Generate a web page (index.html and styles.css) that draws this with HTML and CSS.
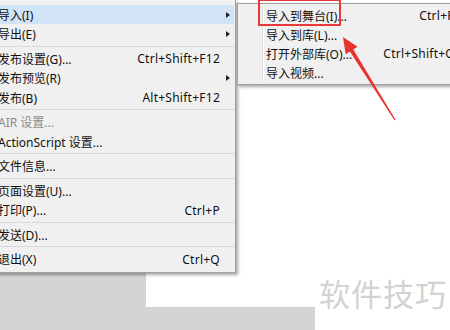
FILE: index.html
```html
<!DOCTYPE html>
<html lang="zh-CN">
<head>
  <meta charset="UTF-8">
  <title>导入菜单</title>
  <link rel="stylesheet" href="styles.css">
</head>
<body>
<div class="workspace">
  <div class="stage"></div>
</div>

<div class="menu">
  <div class="item active"><span class="label">导入(I)</span><span class="key"></span><span class="arrow"></span></div>
  <div class="item"><span class="label">导出(E)</span><span class="key"></span><span class="arrow"></span></div>
  <div class="sep"></div>
  <div class="item"><span class="label">发布设置(G)...</span><span class="key">Ctrl+Shift+F12</span><span class="noarrow"></span></div>
  <div class="item"><span class="label">发布预览(R)</span><span class="key"></span><span class="arrow"></span></div>
  <div class="item"><span class="label">发布(B)</span><span class="key">Alt+Shift+F12</span><span class="noarrow"></span></div>
  <div class="sep"></div>
  <div class="item disabled"><span class="label">AIR 设置...</span><span class="key"></span><span class="noarrow"></span></div>
  <div class="item"><span class="label">ActionScript 设置...</span><span class="key"></span><span class="noarrow"></span></div>
  <div class="sep"></div>
  <div class="item"><span class="label">文件信息...</span><span class="key"></span><span class="noarrow"></span></div>
  <div class="sep"></div>
  <div class="item"><span class="label">页面设置(U)...</span><span class="key"></span><span class="noarrow"></span></div>
  <div class="item"><span class="label">打印(P)...</span><span class="key">Ctrl+P</span><span class="noarrow"></span></div>
  <div class="sep"></div>
  <div class="item"><span class="label">发送(D)...</span><span class="key"></span><span class="noarrow"></span></div>
  <div class="sep"></div>
  <div class="item"><span class="label">退出(X)</span><span class="key">Ctrl+Q</span><span class="noarrow"></span></div>
</div>

<div class="submenu">
  <div class="sub-item"><span class="label">导入到舞台(I)...</span><span class="key">Ctrl+R</span></div>
  <div class="sub-item"><span class="label">导入到库(L)...</span><span class="key"></span></div>
  <div class="sub-item"><span class="label">打开外部库(O)...</span><span class="key">Ctrl+Shift+O</span></div>
  <div class="sub-item"><span class="label">导入视频...</span><span class="key"></span></div>
</div>

<div class="mark-box"></div>
<svg class="mark-arrow" width="450" height="330" viewBox="0 0 450 330">
  <polygon fill="#e8322e" points="343,37 357.5,46.7 353.3,49.4 395.4,119.6 394.6,120.4 349.9,51.6 345.7,54.3"/>
</svg>

<div class="watermark">软件技巧</div>
</body>
</html>
```

FILE: styles.css
```css
body {
  margin: 0;
  width: 450px;
  height: 330px;
  overflow: hidden;
  position: relative;
  background: #d4d4d4;
  font-family: "Noto Sans", "Noto Sans CJK SC", sans-serif;
  font-size: 12px;
  color: #111;
}

.workspace {
  padding-left: 146px;
}
.stage {
  height: 307px;
  background: #fff;
}

/* main file menu */
.menu {
  position: absolute;
  left: -30px;
  top: 0;
  width: 265px;
  padding: 4.75px 0 3px 0;
  background: #f0f0f0;
  border-right: 1px solid #a0a0a0;
  border-bottom: 1px solid #a0a0a0;
  box-shadow: 2px 2px 3px rgba(0,0,0,0.35);
}
.item {
  display: flex;
  align-items: center;
  height: 19.5px;
  padding-left: 28px;
  margin-right: 1px;
}
.item.active {
  background: #d1e4f6;
}
.item.disabled .label {
  color: #8c8c8c;
}
.label {
  flex: 1;
  white-space: nowrap;
}
.key {
  white-space: nowrap;
  letter-spacing: 0.25px;
}
.arrow, .noarrow {
  width: 14px;
  flex: none;
}
.arrow::after {
  content: "";
  display: block;
  margin-left: 6px;
  width: 0;
  height: 0;
  border-left: 4px solid #222;
  border-top: 3.5px solid transparent;
  border-bottom: 3.5px solid transparent;
}
.sep {
  height: 0;
  margin: 2px 0;
  border-top: 1px solid #d9d9d9;
}

/* import submenu */
.submenu {
  position: absolute;
  left: 237px;
  top: 3px;
  width: 260px;
  padding: 2px 0;
  background: #f0f0f0;
  border: 1px solid #a0a0a0;
  box-shadow: 2px 2px 3px rgba(0,0,0,0.35);
}
.submenu::before {
  content: "";
  position: absolute;
  left: 24px;
  top: 2px;
  bottom: 2px;
  border-left: 1px solid #dcdcdc;
  border-right: 1px solid #fff;
}
.sub-item {
  display: flex;
  align-items: center;
  height: 19px;
  padding-left: 28px;
  padding-right: 43px;
}

.mark-box {
  position: absolute;
  left: 258px;
  top: -1px;
  width: 79px;
  height: 23px;
  border: 2px solid #e8393a;
}
.mark-arrow {
  position: absolute;
  left: 0;
  top: 0;
}

.watermark {
  position: absolute;
  left: 315px;
  top: 270px;
  width: 135px;
  height: 60px;
  padding: 9px 0 0 4px;
  box-sizing: border-box;
  background: #fff;
  font-size: 31px;
  line-height: 1;
  color: #d2d2d2;
  letter-spacing: 1px;
}
```
